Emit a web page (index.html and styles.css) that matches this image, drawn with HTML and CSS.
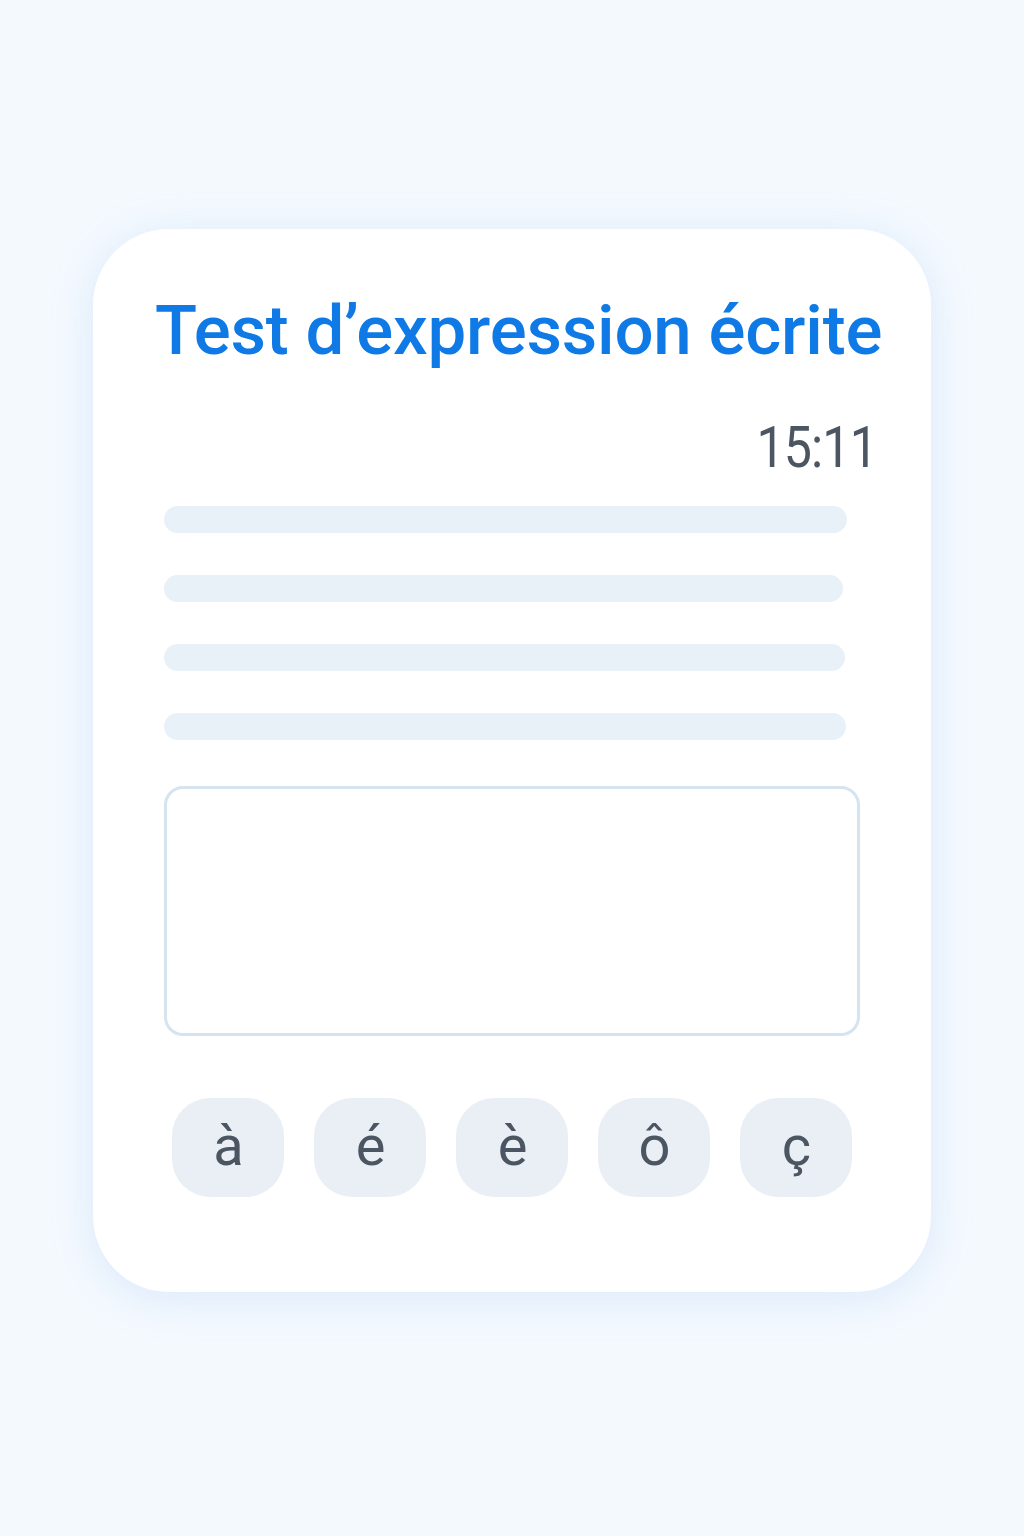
FILE: index.html
```html
<!DOCTYPE html>
<html lang="fr">
<head>
<meta charset="utf-8">
<link rel="stylesheet" href="styles.css">
</head>
<body>
<main class="card">
  <h1 class="title">Test d’expression écrite</h1>
  <div class="timer-row"><span class="timer">15:11</span></div>
  <div class="lines">
    <div class="line" style="width:683px"></div>
    <div class="line" style="width:679px"></div>
    <div class="line" style="width:681px"></div>
    <div class="line" style="width:682px"></div>
  </div>
  <div class="answer"></div>
  <div class="keys">
    <button class="key">à</button>
    <button class="key">é</button>
    <button class="key">è</button>
    <button class="key">ô</button>
    <button class="key">ç</button>
  </div>
</main>
</body>
</html>
```

FILE: styles.css
```css
html, body {
  margin: 0;
  padding: 0;
}
body {
  background: #f4f9fe;
  width: 1024px;
  height: 1536px;
  font-family: Roboto, "Liberation Sans", sans-serif;
  overflow: hidden;
}
.card {
  box-sizing: border-box;
  margin: 229px 0 0 93px;
  width: 838px;
  height: 1063px;
  background: #ffffff;
  border-radius: 76px;
  box-shadow: 0 6px 40px rgba(150, 195, 240, 0.28);
  padding: 0 0 0 71px;
  display: flex;
  flex-direction: column;
}
.title {
  margin: 62px 0 0 -9px;
  font-size: 69px;
  font-weight: 500;
  color: #0f7ae5;
  line-height: 80px;
  letter-spacing: -0.2px;
  white-space: nowrap;
}
.timer-row {
  margin: 47px 0 0 0;
  width: 713px;
  display: flex;
  justify-content: flex-end;
  height: 60px;
}
.timer {
  display: inline-block;
  font-size: 57px;
  font-weight: 400;
  color: #4c5662;
  line-height: 60px;
  letter-spacing: -1px;
  transform: scaleX(0.88);
  transform-origin: right center;
}
.lines {
  margin-top: 28px;
  display: flex;
  flex-direction: column;
  gap: 42px;
}
.line {
  height: 27px;
  border-radius: 14px;
  background: #e8f0f8;
}
.answer {
  margin-top: 46px;
  width: 696px;
  height: 250px;
  box-sizing: border-box;
  border: 3.5px solid #d6e4ef;
  border-radius: 19px;
  background: #fff;
}
.keys {
  margin: 62px 0 0 8px;
  display: flex;
  gap: 30px;
}
.key {
  width: 112px;
  height: 99px;
  border: none;
  border-radius: 38px;
  background: #e9eff5;
  color: #4c5662;
  font-family: Roboto, "Liberation Sans", sans-serif;
  font-size: 56px;
  padding: 0 0 4px;
  line-height: 1;
  letter-spacing: -1px;
}
```
